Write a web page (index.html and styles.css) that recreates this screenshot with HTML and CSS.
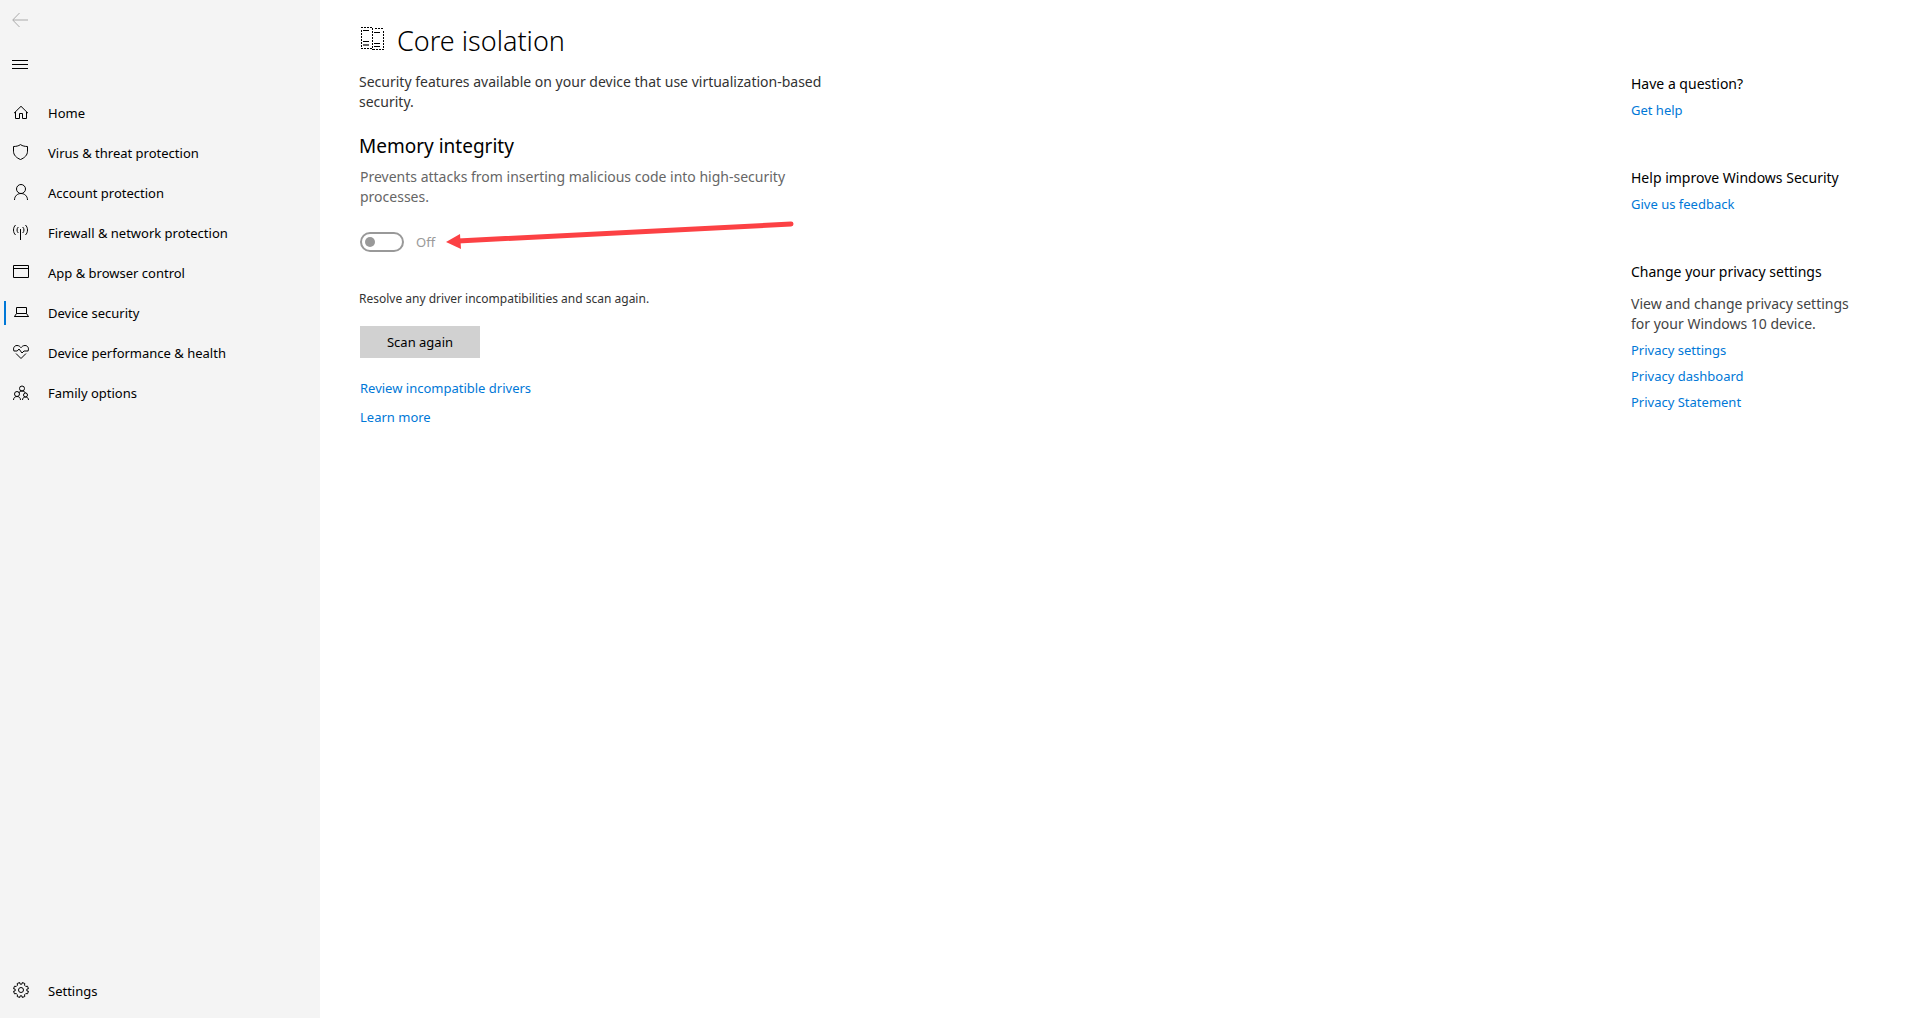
FILE: index.html
```html
<!DOCTYPE html>
<html lang="en">
<head>
    <meta charset="UTF-8">
    <meta name="viewport" content="width=device-width, initial-scale=1.0">
    <title>Windows Security</title>
    <link rel="stylesheet" href="styles.css">
</head>
<body>
    <div class="app">
        <!-- Sidebar -->
        <aside class="sidebar">
            <button type="button" class="icon-button back" aria-label="Back" disabled>
                <svg width="16" height="16" viewBox="0 0 16 16"><path d="M16 8H1M7.500 1L.7 8l6.800 7"/></svg>
            </button>
            <button type="button" class="icon-button menu" aria-label="Menu">
                <svg width="16" height="16" viewBox="0 0 16 16"><path d="M0 4.500h16M0 8.500h16M0 12.500h16"/></svg>
            </button>

            <nav class="nav">
                <a href="#" class="nav-item">
                    <svg width="16" height="16" viewBox="0 0 16 16"><path d="M1 8.200L8 1.300l7 6.900M2.500 7v6.500h4v-5h3v5h4V7"/></svg>
                    Home
                </a>
                <a href="#" class="nav-item">
                    <svg width="16" height="16" viewBox="0 0 16 16"><path d="M7.500-.4C5.500 1 3 1.500.5 1.500v4.700c0 4 3 6.700 7 8.300 4-1.600 7-4.300 7-8.300V1.500C12 1.500 9.500 1 7.500-.4z"/></svg>
                    Virus &amp; threat protection
                </a>
                <a href="#" class="nav-item">
                    <svg width="16" height="16" viewBox="0 0 16 16"><circle cx="8" cy="4" r="4.500"/><path d="M1.500 15c0-4 3-6.500 6.500-6.500s6.500 2.500 6.500 6.500"/></svg>
                    Account protection
                </a>
                <a href="#" class="nav-item">
                    <svg width="16" height="16" viewBox="0 0 16 16"><path d="M7.500 4v11M5.300 2c-1.700 1.700-1.700 4.300 0 6M9.700 2c1.700 1.700 1.700 4.300 0 6M2.600 0C-.2 2.500-.2 7.500 2.600 10M12.400 0c2.800 2.500 2.800 7.500 0 10"/></svg>
                    Firewall &amp; network protection
                </a>
                <a href="#" class="nav-item">
                    <svg width="16" height="16" viewBox="0 0 16 16"><path d="M.5.500h15v12H.5zM.5 3.500h15"/></svg>
                    App &amp; browser control
                </a>
                <a href="#" class="nav-item active">
                    <svg width="16" height="16" viewBox="0 0 16 16"><path d="M3.500 2.500h10v6h-10zM3.500 8.500l-2 3h14l-2-3M1.500 11.500h14"/></svg>
                    Device security
                </a>
                <a href="#" class="nav-item">
                    <svg width="16" height="16" viewBox="0 0 16 16"><path d="M1 6C-.2 3.500 1 .5 4 .5c2 0 3 1 4 2.200 1-1.200 2-2.200 4-2.200 3 0 4.200 3 3 5.500M.8 6h3.400L6 4l3 4 2-2h4.200M3 8.500l5 5 5-5"/></svg>
                    Device performance &amp; health
                </a>
                <a href="#" class="nav-item">
                    <svg width="16" height="16" viewBox="0 0 16 16"><circle cx="9" cy="3.500" r="2.500"/><circle cx="4" cy="9" r="2.500"/><circle cx="12.500" cy="10" r="2"/><path d="M5.800 8c.5-1.300 1.700-2 3.200-2s3 .9 3.500 2M.5 15c0-2.200 1.500-3.500 3.500-3.500S7.500 12.800 7.500 15M9.500 15c0-1.800 1.200-3 3-3s3 1.200 3 3"/></svg>
                    Family options
                </a>
            </nav>

            <a href="#" class="nav-item settings">
                <svg width="16" height="16" viewBox="0 1 16 16"><circle cx="8" cy="8" r="2.500"/><path d="M6.700.5l.3 1.600h2l.3-1.600 2.500 1-.3 1.700 1.300 1.300 1.700-.3 1 2.500-1.600.3v2l1.600.3-1 2.500-1.700-.3-1.300 1.300.3 1.700-2.500 1L9 13.900H7l-.3 1.600-2.500-1 .3-1.700-1.300-1.300-1.700.3-1-2.500L2.100 9V7L.5 6.700l1-2.500 1.700.3 1.300-1.300-.3-1.700z"/></svg>
                Settings
            </a>
        </aside>

        <!-- Core isolation page -->
        <main class="content">
            <div class="page-title">
                <svg width="24" height="24" viewBox="0 0 24 24">
                    <path class="dots" d="M1 .5h11M1.500 3v19M1 21.500h11M12.500 1v22M15 1.500h9M23.500 4v19M13 22.500h11"/>
                    <path class="bars" d="M3 3.500h6M3 14.500h6M14 5.500h6M14 16.500h6M14 19.500h6"/>
                    <path class="soft" d="M3 18h6"/>
                </svg>
                <h1>Core isolation</h1>
            </div>
            <p class="description">Security features available on your device that use virtualization-based security.</p>

            <h2>Memory integrity</h2>
            <p class="description muted">Prevents attacks from inserting malicious code into high-security processes.</p>

            <div class="toggle-row">
                <input type="checkbox" role="switch" id="memoryIntegrity" class="toggle" aria-label="Memory integrity" disabled>
                <label for="memoryIntegrity">Off</label>
                <svg class="arrow" width="348" height="32" viewBox="0 0 348 32">
                    <path class="shaft" d="M12 21L345 4"/>
                    <path class="head" d="M0 22l14-8 1 15z"/>
                </svg>
            </div>

            <p class="note">Resolve any driver incompatibilities and scan again.</p>
            <button type="button" class="scan-button">Scan again</button>
            <div class="links">
                <a href="#">Review incompatible drivers</a>
                <a href="#">Learn more</a>
            </div>
        </main>

        <!-- Help column -->
        <aside class="help">
            <section>
                <h3>Have a question?</h3>
                <a href="#">Get help</a>
            </section>
            <section>
                <h3>Help improve Windows Security</h3>
                <a href="#">Give us feedback</a>
            </section>
            <section>
                <h3>Change your privacy settings</h3>
                <p>View and change privacy settings for your Windows 10 device.</p>
                <a href="#">Privacy settings</a>
                <a href="#">Privacy dashboard</a>
                <a href="#">Privacy Statement</a>
            </section>
        </aside>
    </div>
</body>
</html>
```
FILE: styles.css
```css
* {
    box-sizing: border-box;
}
body {
    margin: 0;
    font-family: "Segoe UI", "Noto Sans", "Open Sans", sans-serif;
    font-size: 13px;
    line-height: 20px;
    color: #000;
    background-color: #fff;
}
h1, h2, h3, p {
    margin: 0;
    font-weight: normal;
}
a {
    color: #0078d7;
    text-decoration: none;
}
.app {
    display: flex;
    min-height: 100vh;
}

/* Sidebar */
.sidebar {
    display: flex;
    flex-direction: column;
    flex-shrink: 0;
    width: 320px;
    padding-bottom: 7px;
    background-color: #f4f4f4;
}
.sidebar svg {
    flex-shrink: 0;
    overflow: visible;
    fill: none;
    stroke: #000;
    stroke-width: 1;
}
.icon-button {
    display: flex;
    align-items: center;
    width: 48px;
    height: 40px;
    padding: 0 12px;
    border: none;
    background: none;
}
.icon-button.menu {
    height: 48px;
}
.sidebar .back svg {
    stroke: #aaa;
}
.nav {
    margin-top: 5px;
}
.nav-item {
    display: flex;
    align-items: center;
    gap: 19px;
    height: 40px;
    padding-left: 13px;
    color: #000;
}
.nav-item.active {
    padding-left: 7px;
}
.nav-item.active::before {
    content: "";
    width: 2px;
    height: 24px;
    margin-left: -3px;
    margin-right: -12px;
    background-color: #0078d7;
}
.settings {
    margin-top: auto;
}

/* Main content */
.content {
    flex: 1;
    padding: 21px 40px 21px 39px;
}
.page-title {
    display: flex;
    align-items: flex-start;
    gap: 13px;
    padding-left: 1px;
}
.page-title svg {
    margin-top: 6px;
    fill: none;
    stroke: #000;
}
.page-title .dots {
    stroke-dasharray: 2 1;
}
.page-title .soft {
    stroke: #666;
    stroke-width: 2;
}
h1 {
    font-size: 27px;
    font-weight: 300;
    line-height: 40px;
}
.description {
    max-width: 480px;
    margin-top: 11px;
    font-size: 14px;
    color: #333;
}
h2 {
    margin-top: 20px;
    font-size: 19px;
    line-height: 28px;
}
.description.muted {
    max-width: 450px;
    margin-top: 7px;
    padding-left: 1px;
    color: #666;
}
.toggle-row {
    position: relative;
    display: flex;
    align-items: center;
    gap: 12px;
    margin-top: 25px;
    padding-left: 1px;
    color: #999;
}
.toggle {
    display: flex;
    align-items: center;
    appearance: none;
    width: 44px;
    height: 20px;
    margin: 0;
    padding: 0 3px;
    border: 2px solid #999;
    border-radius: 10px;
}
.toggle::before {
    content: "";
    width: 10px;
    height: 10px;
    border-radius: 50%;
    background-color: #999;
}
.arrow {
    position: absolute;
    left: 87px;
    top: -12px;
}
.arrow .shaft {
    stroke: #fc4144;
    stroke-width: 5;
    stroke-linecap: round;
}
.arrow .head {
    fill: #fc4144;
}
.note {
    margin-top: 37px;
    font-size: 12px;
    color: #333;
}
.scan-button {
    width: 120px;
    height: 32px;
    margin: 17px 0 0 1px;
    border: none;
    font-family: inherit;
    font-size: 13px;
    color: #000;
    background-color: #d1d1d1;
}
.links {
    display: flex;
    flex-direction: column;
    align-items: flex-start;
    gap: 9px;
    margin-top: 20px;
    padding-left: 1px;
}

/* Help column */
.help {
    display: flex;
    flex-direction: column;
    flex-shrink: 0;
    gap: 48px;
    width: 289px;
    padding: 74px 56px 0 0;
}
.help section {
    display: flex;
    flex-direction: column;
    align-items: flex-start;
    gap: 6px;
}
.help h3 {
    font-size: 14px;
    line-height: 20px;
}
.help p {
    margin-top: 6px;
    font-size: 14px;
    color: #444;
}
```
